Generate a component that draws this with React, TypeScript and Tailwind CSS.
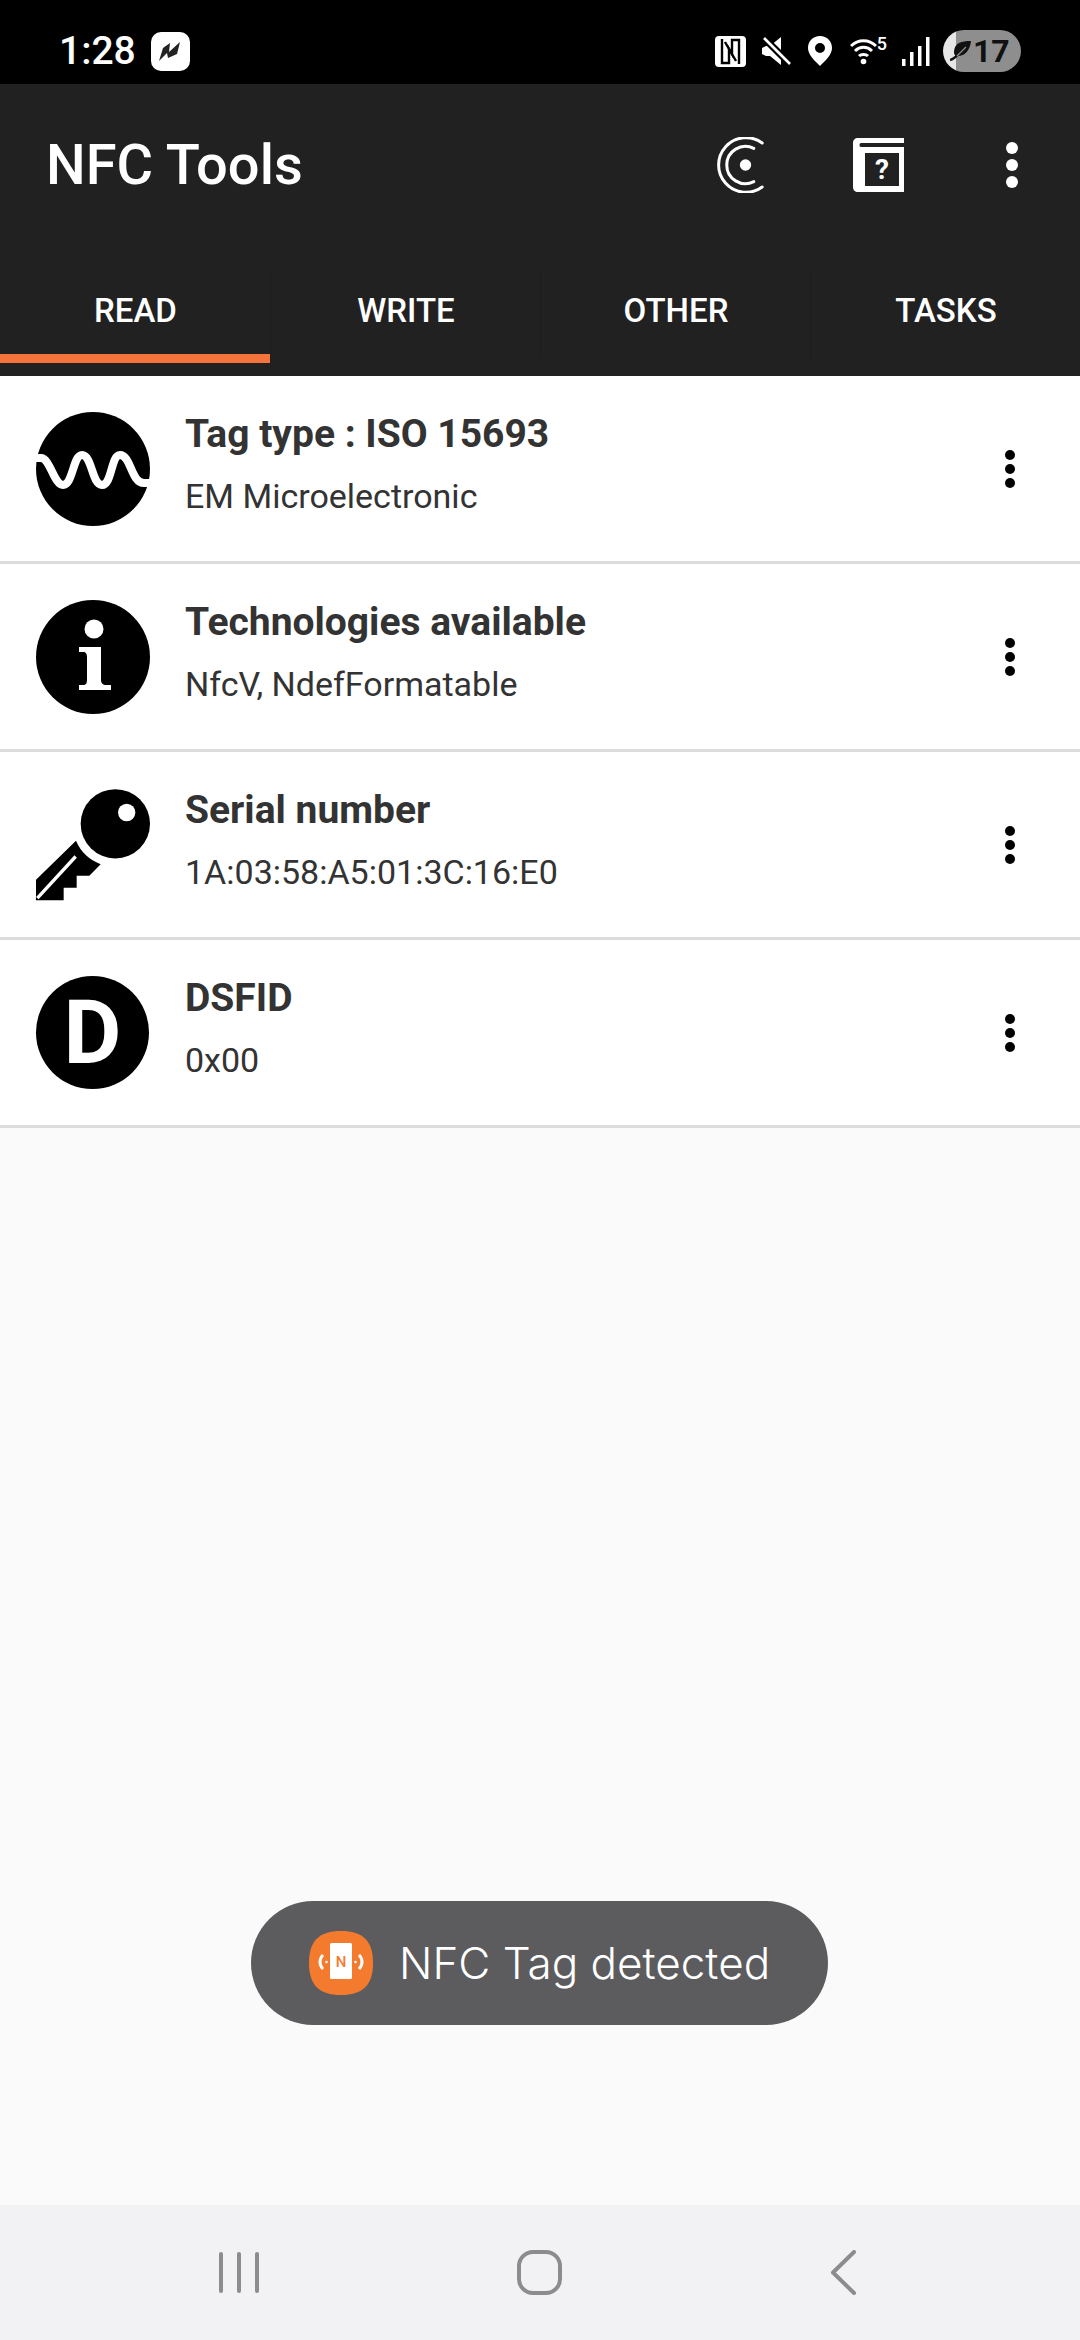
const rows = [
  { title: "Tag type : ISO 15693", sub: "EM Microelectronic", icon: "wave" },
  { title: "Technologies available", sub: "NfcV, NdefFormatable", icon: "info" },
  { title: "Serial number", sub: "1A:03:58:A5:01:3C:16:E0", icon: "key" },
  { title: "DSFID", sub: "0x00", icon: "d" },
];

const tabs = ["READ", "WRITE", "OTHER", "TASKS"];

function RowIcon({ kind }: { kind: string }) {
  if (kind === "wave") {
    return (
      <svg width="114" height="114" viewBox="0 0 114 114">
        <circle cx="57" cy="57" r="57" fill="#000" />
        <path
          d="M-2 46H5C14 46 18 73 27 73C37 73 37 43 46 43C56 43 56 73 66 73C76 73 75 43 84 43C95 43 95 71 108 71H116"
          fill="none"
          stroke="#fff"
          strokeWidth="8"
        />
      </svg>
    );
  }
  if (kind === "info") {
    return (
      <svg width="114" height="114" viewBox="0 0 114 114">
        <circle cx="57" cy="57" r="57" fill="#000" />
        <circle cx="58" cy="29" r="9.5" fill="#fff" />
        <path
          d="M43 47H65V80C65 83 67 85 70 85H75V90H43V85H47C50 85 51 83 51 80V57C51 54 50 52 47 52H43Z"
          fill="#fff"
        />
      </svg>
    );
  }
  if (kind === "key") {
    return (
      <svg width="115" height="112" viewBox="108 90 345 335">
        <circle cx="346" cy="194" r="104" fill="#000" />
        <circle cx="380" cy="160" r="26" fill="#fff" />
        <path d="M228 245A128 128 0 0 0 302 315L268 350H230V386H191V423H108V362Z" fill="#000" />
        <path d="M112 417L227 292" stroke="#fff" strokeWidth="10" />
      </svg>
    );
  }
  return (
    <div className="flex h-[113px] w-[113px] items-center justify-center rounded-full bg-black text-[89px] font-bold leading-none text-white">
      D
    </div>
  );
}

export default function App() {
  return (
    <div className="flex h-[2340px] w-[1080px] flex-col overflow-hidden bg-[#fafafa] font-['Roboto',sans-serif]">
      {/* status bar */}
      <div className="flex h-[84px] shrink-0 items-center bg-black pl-[59px] pr-[59px] pt-[18px]">
        <span className="text-[39px] font-medium leading-none text-white">1:28</span>
        <svg className="ml-[15px]" width="39" height="39" viewBox="0 0 39 39">
          <rect width="39" height="39" rx="10" fill="#fff" />
          <path d="M8 29L12 16L19 11L18 20L29 10L26 22L17 26L16 21Z" fill="#222" />
        </svg>
        <div className="ml-auto flex items-center">
          <svg width="31" height="31" viewBox="0 0 31 31">
            <rect width="31" height="31" rx="4" fill="#fff" />
            <path d="M7 3V27H14V13L21 25" fill="none" stroke="#000" strokeWidth="2.4" />
            <path d="M24 28V4H17V18L10 6" fill="none" stroke="#000" strokeWidth="2.4" />
          </svg>
          <svg className="ml-[16px]" width="29" height="29" viewBox="0 0 29 29">
            <path d="M0 11L4 9H8L19 0V28L8 19H4L0 17Z" fill="#fff" />
            <path d="M1 0L28 27" stroke="#000" strokeWidth="7" />
            <path d="M2 1L28 27" stroke="#fff" strokeWidth="2.6" />
          </svg>
          <svg className="ml-[17px]" width="24" height="30" viewBox="0 0 24 30">
            <path
              fillRule="evenodd"
              d="M12 0C5 0 0 5 0 12C0 19 7 25 12 30C17 25 24 19 24 12C24 5 19 0 12 0ZM12 7A5 5 0 1 1 12 17A5 5 0 1 1 12 7Z"
              fill="#fff"
            />
          </svg>
          <div className="relative ml-[18px] h-[30px] w-[37px]">
            <svg width="27" height="28" viewBox="0 0 27 28" className="mt-[1px]">
              <path d="M1 9C8 2 19 2 26 9M5 14C10 9 17 9 22 14M9 19C11 17 16 17 18 19" fill="none" stroke="#fff" strokeWidth="3" />
              <circle cx="13.500" cy="24.500" r="2.800" fill="#fff" />
            </svg>
            <span className="absolute right-0 top-[-1px] text-[18px] font-medium leading-[18px] text-white">5</span>
          </div>
          <svg className="ml-[15px]" width="28" height="29" viewBox="0 0 28 29">
            <path d="M0 22H3.500V29H0ZM8 15H11.500V29H8ZM16 9H19.500V29H16ZM24 0H27.500V29H24Z" fill="#fff" />
          </svg>
          <div className="ml-[13px] flex h-[42px] w-[78px] items-center rounded-full bg-[linear-gradient(90deg,#e6e6e6_13px,#8e8e8e_13px)] pl-[7px]">
            <svg width="22" height="24" viewBox="0 0 22 24">
              <path d="M21 2C11 2 5 4 4 12C4 14 4 16 6 17C14 18 20 12 21 2Z" fill="#111" />
              <path d="M0 21C4 20 7 17 10 13" fill="none" stroke="#111" strokeWidth="2.400" />
              <path d="M7 17C10 14 13 11 16 8" fill="none" stroke="#8e8e8e" strokeWidth="1.200" />
            </svg>
            <span className="ml-[1px] text-[32px] font-bold leading-none text-[#111]">17</span>
          </div>
        </div>
      </div>

      {/* app bar */}
      <div className="h-[292px] shrink-0 bg-[#212121]">
        <div className="flex h-[188px] items-center pb-[26px] pl-[46px]">
          <h1 className="text-[56px] font-medium leading-none text-white">NFC Tools</h1>
          <svg className="ml-auto" width="47" height="56" viewBox="20 28 140 168">
            <path d="M155 46A82 82 0 1 0 155 178" fill="none" stroke="#fff" strokeWidth="9" strokeLinecap="round" />
            <path d="M130 62A56 56 0 1 0 130 162" fill="none" stroke="#fff" strokeWidth="9" strokeLinecap="round" />
            <circle cx="105" cy="112" r="17" fill="#fff" />
          </svg>
          <svg className="ml-[89px]" width="51" height="54" viewBox="0 0 51 54">
            <path
              fillRule="evenodd"
              d="M5 0H51V5H8C6 5 6 9 8 9H51V54H5C2 54 0 52 0 49V5C0 2 2 0 5 0ZM12 15V48H46V15Z"
              fill="#fff"
            />
            <text x="29" y="41" textAnchor="middle" fontSize="28" fontWeight="700" fill="#fff" fontFamily="Roboto, sans-serif">
              ?
            </text>
          </svg>
          <div className="ml-[102px] mr-[62px] flex flex-col gap-[5px]">
            <span className="h-[12px] w-[12px] rounded-full bg-white" />
            <span className="h-[12px] w-[12px] rounded-full bg-white" />
            <span className="h-[12px] w-[12px] rounded-full bg-white" />
          </div>
        </div>
        <div className="grid h-[91px] grid-cols-4">
          {tabs.map((t, i) => (
            <div
              key={t}
              className={
                i === 0
                  ? "flex items-center justify-center border-b-[9px] border-[#f4743b] pb-[6px] pl-[1px]"
                  : "flex items-center justify-center border-b-[9px] border-[#212121] border-l border-l-[#1c1c1c] pb-[6px] pl-[1px]"
              }
            >
              <span className="text-[33px] font-medium leading-none text-white">{t}</span>
            </div>
          ))}
        </div>
      </div>

      {/* tag records */}
      <div className="relative flex-1">
        {rows.map((r) => (
          <div key={r.title} className="flex h-[188px] items-center border-b-[3px] border-[#dcdcdc] bg-white pl-[36px] pr-[65px]">
            <div className="flex w-[149px] shrink-0 items-center">
              <RowIcon kind={r.icon} />
            </div>
            <div className="flex min-w-0 flex-1 flex-col pb-[7px]">
              <div className="text-[39px] font-bold leading-[46px] text-[#333333]">{r.title}</div>
              <div className="mt-[16px] text-[34px] leading-[46px] text-[#333333]">{r.sub}</div>
            </div>
            <div className="flex flex-col gap-[4px]">
              <span className="h-[10px] w-[10px] rounded-full bg-black" />
              <span className="h-[10px] w-[10px] rounded-full bg-black" />
              <span className="h-[10px] w-[10px] rounded-full bg-black" />
            </div>
          </div>
        ))}

        {/* toast */}
        <div className="absolute left-[251px] top-[1525px] flex h-[124px] w-[577px] items-center rounded-full bg-[#5c5c5e] pl-[58px]">
          <svg width="64" height="64" viewBox="0 0 64 64">
            <path d="M32 0C54 0 64 10 64 32C64 54 54 64 32 64C10 64 0 54 0 32C0 10 10 0 32 0Z" fill="#f47b2e" />
            <rect x="21" y="12" width="22" height="36" rx="1.500" fill="#fff" />
            <text x="32" y="36" textAnchor="middle" fontSize="15" fontWeight="500" fill="#f47b2e" fontFamily="Roboto, sans-serif">
              N
            </text>
            <path d="M14 24C10 28 10 34 14 38M50 24C54 28 54 34 50 38" fill="none" stroke="#fff" strokeWidth="3" />
            <circle cx="17.500" cy="31" r="1.300" fill="#fff" />
            <circle cx="46.500" cy="31" r="1.300" fill="#fff" />
          </svg>
          <span className="ml-[26px] font-['Inter',sans-serif] text-[44px] font-light leading-none text-white">NFC Tag detected</span>
        </div>
      </div>

      {/* navigation bar */}
      <div className="flex h-[135px] shrink-0 items-center bg-[#f2f2f4] pl-[219px] pr-[224px]">
        <div className="flex gap-[14px]">
          <span className="h-[41px] w-[4px] rounded-full bg-[#8c8c8c]" />
          <span className="h-[41px] w-[4px] rounded-full bg-[#8c8c8c]" />
          <span className="h-[41px] w-[4px] rounded-full bg-[#8c8c8c]" />
        </div>
        <div className="ml-[258px] h-[45px] w-[45px] rounded-[16px] border-[4px] border-[#8c8c8c]" />
        <svg className="ml-auto" width="26" height="45" viewBox="0 0 26 45">
          <path d="M24 2L3 22.500L24 43" fill="none" stroke="#8c8c8c" strokeWidth="4" strokeLinecap="round" strokeLinejoin="round" />
        </svg>
      </div>
    </div>
  );
}
